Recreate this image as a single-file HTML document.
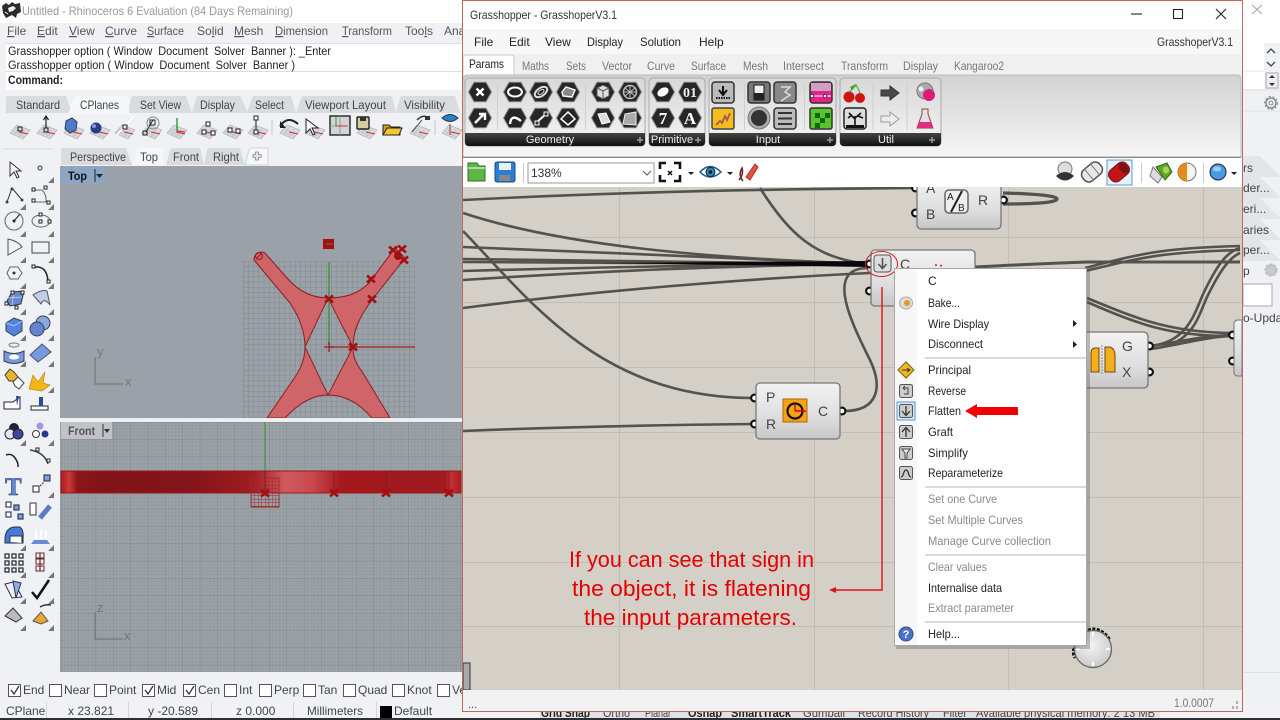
<!DOCTYPE html>
<html><head><meta charset="utf-8"><title>Grasshopper</title>
<style>
html,body{margin:0;padding:0;background:#f0f1f4;width:1280px;height:720px;overflow:hidden}
svg{display:block;position:absolute;left:0;top:0;filter:blur(.3px)}
text{font-family:"Liberation Sans",sans-serif;font-size:12px;fill:#222}
.g{fill:#999}.rm{fill:#555}.tb{fill:#444}.gt{fill:#777}.dis{fill:#8a8a8a}
.b{font-weight:bold}
.cmp{font-size:14px;fill:#444}
.ann{font-size:22px;fill:#e50000}
.u{text-decoration:underline}
.pre{white-space:pre}
</style></head><body>
<svg width="1280" height="720" viewBox="0 0 1280 720" xmlns="http://www.w3.org/2000/svg">
<defs>
<clipPath id="cv"><rect x="463" y="187" width="779" height="503"/></clipPath>
<linearGradient id="rib" x1="0" y1="0" x2="0" y2="1"><stop offset="0" stop-color="#d2d2d2"/><stop offset="1" stop-color="#f6f6f6"/></linearGradient>
<linearGradient id="grp" x1="0" y1="0" x2="0" y2="1"><stop offset="0" stop-color="#d8d8d8"/><stop offset="1" stop-color="#f4f4f4"/></linearGradient>
<linearGradient id="bar" x1="0" y1="0" x2="0" y2="1"><stop offset="0" stop-color="#444"/><stop offset="1" stop-color="#111"/></linearGradient>
<linearGradient id="cmp" x1="0" y1="0" x2="0" y2="1"><stop offset="0" stop-color="#f2f2f2"/><stop offset=".6" stop-color="#dedede"/><stop offset="1" stop-color="#c6c6c6"/></linearGradient>
<radialGradient id="dial" cx=".45" cy=".4" r=".7"><stop offset="0" stop-color="#f4f4f4"/><stop offset="1" stop-color="#c4c4c4"/></radialGradient>
<linearGradient id="band" x1="0" y1="0" x2="1" y2="0">
<stop offset="0" stop-color="#a81c20"/><stop offset=".02" stop-color="#cf3a3c"/><stop offset=".04" stop-color="#8c1519"/><stop offset=".12" stop-color="#7f1417"/><stop offset=".33" stop-color="#84151a"/><stop offset=".48" stop-color="#a01c20"/><stop offset=".56" stop-color="#cf5a5e"/><stop offset=".63" stop-color="#c9484c"/><stop offset=".7" stop-color="#a5191e"/><stop offset=".96" stop-color="#a01a1f"/><stop offset=".975" stop-color="#c53034"/><stop offset="1" stop-color="#a81c20"/></linearGradient>
<pattern id="fine" x="61" y="422" width="17.35" height="17.35" patternUnits="userSpaceOnUse">
<path d="M3.47 0V17.35M6.94 0V17.35M10.41 0V17.35M13.88 0V17.35M0 3.47H17.35M0 6.94H17.35M0 10.41H17.35M0 13.88H17.35" stroke="#929a9f" stroke-width=".7" fill="none"/>
<path d="M0 0V17.35M0 0H17.35" stroke="#7f868b" stroke-width="1" fill="none"/>
</pattern>
<pattern id="plane" x="243" y="261" width="5.2" height="5.2" patternUnits="userSpaceOnUse"><path d="M0 0V5.2M0 0H5.2" stroke="#7c858a" stroke-width=".8" fill="none"/></pattern>
<pattern id="rgrid" x="251" y="478" width="3.5" height="3.5" patternUnits="userSpaceOnUse"><path d="M0 0V3.5M0 0H3.5" stroke="#a32a2e" stroke-width=".9" fill="none"/></pattern>
<symbol id="hx" overflow="visible" viewBox="-12 -11 24 22" width="24" height="22"><polygon points="-11.5,0 -6,-9.8 6,-9.8 11.5,0 6,9.8 -6,9.8" fill="#262626" stroke="#8c8c8c" stroke-width="1"/></symbol>
<symbol id="cp" overflow="visible" viewBox="0 0 24 20" width="24" height="20"><polygon points="2,13 9,5 22,10 15,19" fill="#d8d9dc" stroke="#b4b4b8" stroke-width=".7"/><path d="M6 9 19 14M4 11 17 17M12 6 6 15M17 8 11 17" stroke="#bcbcc0" stroke-width=".6"/><path d="M11 12 20 14" stroke="#c33" stroke-width="1.1"/></symbol>
<symbol id="tri" overflow="visible" viewBox="0 0 6 6" width="6" height="6"><polygon points="6,0 6,6 0,6" fill="#777"/></symbol>
<g id="mk"><path d="M-4 -3.5 4 3.5M-4 3.5 4 -3.5" stroke="#a40f12" stroke-width="2.6"/></g>
<g id="port"><circle r="3.400" fill="#fff" stroke="#111" stroke-width="2.200"/></g>
</defs>

<!-- Rhino background -->
<rect width="1280" height="720" fill="#f0f1f4"/>
<rect width="1280" height="23" fill="#fff"/>
<path d="M2 6 6 3 9 5 12 2 15 4 20 3 21 12 17 14 16 18 12 15 6 18 3 13Z" fill="#2b2b2b"/><path d="M8 8 13 6 16 8 13 11 9 12Z" fill="#f0f0f0"/><path d="M5 12 8 14" stroke="#eee"/>
<text x="22" y="15" class="g" textLength="271" lengthAdjust="spacingAndGlyphs">Untitled - Rhinoceros 6 Evaluation (84 Days Remaining)</text>
<g>
<text class="rm" x="7" y="35"><tspan class="u">F</tspan>ile</text>
<text class="rm" x="37" y="35"><tspan class="u">E</tspan>dit</text>
<text class="rm" x="69" y="35"><tspan class="u">V</tspan>iew</text>
<text class="rm" x="105" y="35"><tspan class="u">C</tspan>urve</text>
<text class="rm" x="147" y="35" textLength="37" lengthAdjust="spacingAndGlyphs"><tspan class="u">S</tspan>urface</text>
<text class="rm" x="197" y="35">So<tspan class="u">l</tspan>id</text>
<text class="rm" x="234" y="35"><tspan class="u">M</tspan>esh</text>
<text class="rm" x="275" y="35" textLength="53" lengthAdjust="spacingAndGlyphs"><tspan class="u">D</tspan>imension</text>
<text class="rm" x="342" y="35" textLength="50" lengthAdjust="spacingAndGlyphs"><tspan class="u">T</tspan>ransform</text>
<text class="rm" x="405" y="35">Too<tspan class="u">l</tspan>s</text>
<text class="rm" x="444" y="35">Ana</text>
</g>
<!-- command -->
<rect x="6" y="43" width="456" height="47" fill="#fff"/>
<path d="M6 71.500H462M6 43.500H462" stroke="#dcdde2"/>
<text x="8" y="55" class="pre" textLength="323" lengthAdjust="spacingAndGlyphs">Grasshopper option ( Window  Document  Solver  Banner ): _Enter</text>
<text x="8" y="69" class="pre" textLength="287" lengthAdjust="spacingAndGlyphs">Grasshopper option ( Window  Document  Solver  Banner )</text>
<text x="8" y="84" class="b" textLength="55" lengthAdjust="spacingAndGlyphs">Command:</text>
<!-- toolbar tabs -->
<g fill="#dadbdf">
<path d="M6 113V98Q6 96 8 96H66L72 113Z"/><path d="M128 113 131 98Q132 96 134 96H186L192 113Z"/><path d="M192 113 196 98Q197 96 199 96H240L248 113Z"/><path d="M247 113 252 98Q253 96 255 96H291L296 113Z"/><path d="M296 113 301 98Q302 96 304 96H392L396 113Z"/><path d="M396 113 400 98Q401 96 403 96H455L460 113Z"/>
</g>
<path d="M68 114 74 98Q75 96 77 96H126Q129 96 129 99V114Z" fill="#f6f7f9"/>
<g>
<text class="tb" x="16" y="109" textLength="44" lengthAdjust="spacingAndGlyphs">Standard</text>
<text class="tb" x="80" y="109" textLength="39" lengthAdjust="spacingAndGlyphs">CPlanes</text>
<text class="tb" x="140" y="109" textLength="41" lengthAdjust="spacingAndGlyphs">Set View</text>
<text class="tb" x="200" y="109" textLength="35" lengthAdjust="spacingAndGlyphs">Display</text>
<text class="tb" x="255" y="109" textLength="29" lengthAdjust="spacingAndGlyphs">Select</text>
<text class="tb" x="305" y="109" textLength="81" lengthAdjust="spacingAndGlyphs">Viewport Layout</text>
<text class="tb" x="404" y="109" textLength="41" lengthAdjust="spacingAndGlyphs">Visibility</text>
</g>
<!-- cplane toolbar -->
<use href="#cp" x="8" y="120"/><use href="#cp" x="35" y="120"/><use href="#cp" x="62" y="120"/><use href="#cp" x="88" y="120"/><use href="#cp" x="113" y="120"/><use href="#cp" x="140" y="120"/><use href="#cp" x="165" y="120"/><use href="#cp" x="195" y="120"/><use href="#cp" x="221" y="120"/><use href="#cp" x="246" y="120"/><use href="#cp" x="278" y="120"/><use href="#cp" x="303" y="120"/><use href="#cp" x="355" y="120"/><use href="#cp" x="408" y="120"/><use href="#cp" x="440" y="120"/>
<rect x="18" y="127" width="4" height="4" fill="none" stroke="#222"/><rect x="44" y="128" width="4" height="4" fill="none" stroke="#222"/><path d="M46 128V117M43.500 120 46 116 48.500 120" stroke="#222" fill="none" stroke-width="1.200"/>
<path d="M66 121 72 118 77 122 76 130 70 133 65 129Z" fill="#4f78cc" stroke="#345"/>
<circle cx="96" cy="128" r="5.500" fill="#243f8f"/><circle cx="94" cy="126" r="2" fill="#7f9ce0"/>
<path d="M117 135 134 116" stroke="#fff" stroke-width="1.500"/><rect x="123" y="125" width="4" height="4" fill="none" stroke="#222"/>
<path d="M146 132 153 120" stroke="#222"/><rect x="143" y="131" width="4" height="4" fill="none" stroke="#222"/><circle cx="153" cy="123" r="6" fill="none" stroke="#888"/><rect x="150" y="120" width="5" height="5" fill="none" stroke="#222"/>
<path d="M177 118V131" stroke="#2a9a2a" stroke-width="1.400"/><path d="M177 131 185 132" stroke="#c33" stroke-width="1.200"/>
<g fill="#fff" stroke="#222"><rect x="202" y="130" width="4" height="4"/><rect x="206" y="122" width="4" height="4"/><rect x="211" y="131" width="4" height="4"/><rect x="228" y="128" width="4" height="4"/><rect x="236" y="129" width="4" height="4"/><rect x="254" y="116" width="4" height="4"/><rect x="254" y="130" width="4" height="4"/></g><path d="M256 120V130" stroke="#222"/>
<path d="M280 126Q288 115 298 124" fill="none" stroke="#222" stroke-width="2"/><path d="M280 121V128H286Z" fill="#222"/>
<path d="M306 119V133L310 129 313 135 315 134 312 128H318Z" fill="#fff" stroke="#222"/>
<rect x="330" y="116" width="20" height="19" fill="#d3d4d6" stroke="#222" stroke-width="1.400"/><path d="M330 126H350M340 116V135" stroke="#999"/><path d="M336 126H347" stroke="#c33"/><path d="M336 117V126" stroke="#2a2"/>
<rect x="357" y="117" width="12" height="12" rx="1" fill="#d8cda0" stroke="#222" stroke-width="1.400"/><rect x="360" y="117" width="6" height="4" fill="#333"/>
<path d="M383 135V125H389L391 127H400V135Z" fill="#dca018" stroke="#222"/><path d="M383 135 387 128H402L399 135Z" fill="#f6c534" stroke="#222"/>
<path d="M412 132 422 120" stroke="#555"/><path d="M417 120Q424 113 430 119" stroke="#333" fill="none" stroke-width="1.400"/><rect x="425" y="116" width="5" height="4" fill="#333"/>
<path d="M442 118Q450 111 458 118Q450 125 442 118Z" fill="#2b7fc6" stroke="#234"/><path d="M450 124V135" stroke="#a33"/>
<path d="M272 120V135M435 120V135" stroke="#c7c8cb"/>
<!-- view tabs -->
<g fill="#dadbdf"><path d="M61 165V150Q61 148 63 148H126L132 165Z"/><path d="M166 165 170 150Q171 148 173 148H200L204 165Z"/><path d="M204 165 207 150Q208 148 210 148H240L245 165Z"/></g>
<path d="M132 165 137 150Q138 148 140 148H160Q163 148 163 151V165Z" fill="#f6f7f9"/><path d="M245 165 249 150Q250 148 252 148H268V165Z" fill="#f6f7f9" stroke="#d3d4d8"/>
<g><text class="tb" x="70" y="161" textLength="56" lengthAdjust="spacingAndGlyphs">Perspective</text><text class="tb" x="140" y="161" textLength="18" lengthAdjust="spacingAndGlyphs">Top</text><text class="tb" x="173" y="161" textLength="26" lengthAdjust="spacingAndGlyphs">Front</text><text class="tb" x="213" y="161" textLength="26" lengthAdjust="spacingAndGlyphs">Right</text></g>
<path d="M255.500 152h3v2.500h2.500v3h-2.500v2.500h-3v-2.500H253v-3h2.500z" fill="#e4e4e4" stroke="#888" stroke-width=".8"/>
<!-- Top viewport -->
<rect x="60" y="166" width="402" height="252" fill="#9aa1a8"/>
<rect x="61" y="167" width="44" height="17" fill="#8ca7c6"/>
<text x="68" y="180" class="b" textLength="19" lengthAdjust="spacingAndGlyphs" style="fill:#111">Top</text>
<path d="M95 169V182" stroke="#222"/><path d="M96 174H103L99.500 178Z" fill="#222"/>
<rect x="243" y="261" width="172" height="157" fill="url(#plane)"/>
<path d="M254 260A7.500 7.500 0 0 1 265 253L287 278C300 293 315 298 328 298C345 298 358 294 369 283L395 248L405 258L372 300C360 316 353 330 353 347C353 360 358 366 363 373L390 418H372C360 404 345 395 328 395C312 395 298 404 285 418H267L293 380C300 370 305 360 305 347C305 330 298 315 290 303Z" fill="#cf6569" stroke="#8d1d20"/>
<path d="M328 298 353 347 328 395 305 347Z" fill="#9aa1a8" stroke="#8d1d20"/>
<path d="M328 298 353 347 328 395 305 347Z" fill="url(#plane)"/>
<circle cx="259" cy="256" r="3.500" fill="none" stroke="#8d1d20"/><path d="M257 258 261 254" stroke="#8d1d20"/>
<path d="M329 262V345" stroke="#4f9a4f" stroke-width="1.800"/><path d="M329 347H415" stroke="#a33436" stroke-width="1.500"/><path d="M324 347H334M329 342V352" stroke="#9c1a1c" stroke-width="1.200"/>
<rect x="323" y="239" width="11" height="10" fill="#a40f12"/><path d="M326 244H333" stroke="#4a8a3a"/>
<use href="#mk" x="329" y="299"/><use href="#mk" x="371" y="279"/><use href="#mk" x="372" y="299"/><use href="#mk" x="353" y="347"/><use href="#mk" x="393" y="250"/><use href="#mk" x="402" y="249"/><use href="#mk" x="404" y="260"/><circle cx="398" cy="256" r="4" fill="#a40f12"/>
<path d="M95 357V384H123" fill="none" stroke="#777" stroke-width="1.200"/>
<text x="97" y="356" style="fill:#777;font-size:13px">y</text><text x="125" y="386" style="fill:#777;font-size:13px">x</text>
<!-- divider + Front viewport -->
<rect x="60" y="418" width="402" height="4" fill="#eef0f2"/>
<rect x="60" y="422" width="402" height="250" fill="#9ba2a8"/>
<rect x="60" y="422" width="402" height="250" fill="url(#fine)"/>
<rect x="61" y="422" width="51" height="17" fill="#bfc3c7"/>
<text x="68" y="435" class="b" style="fill:#555" textLength="27" lengthAdjust="spacingAndGlyphs">Front</text>
<path d="M103 424V437" stroke="#333"/><path d="M104 429H110L107 433Z" fill="#333"/>
<path d="M265 422V471" stroke="#4f9a4f" stroke-width="1.500"/>
<rect x="61" y="471" width="400" height="22" fill="url(#band)" stroke="#9c1a1e"/>
<path d="M143 471V493M196 471V493M334 471V493M386 471V493M449 471V493" stroke="#8a1418" stroke-width=".8"/>
<rect x="251" y="478" width="28" height="29" fill="url(#rgrid)" stroke="#a32a2e"/>
<path d="M265 471V493" stroke="#8a1418"/>
<use href="#mk" x="265" y="493"/><use href="#mk" x="334" y="493"/><use href="#mk" x="386" y="493"/><use href="#mk" x="449" y="493"/>
<path d="M95 612V639H123" fill="none" stroke="#777" stroke-width="1.200"/>
<text x="97" y="612" style="fill:#777;font-size:13px">z</text><text x="124" y="640" style="fill:#777;font-size:13px">x</text>
<!-- Left toolbars -->
<path d="M3 149H53" stroke="#d8d9dc"/>
<path d="M10 162V176L14 172 17 178 19 177 16 171H21Z" fill="#f8f8f8" stroke="#333"/><circle cx="40" cy="168" r="2" fill="none" stroke="#333"/>
<path d="M7 202 12 188 22 200" fill="none" stroke="#333"/><g fill="#444"><circle cx="7" cy="202" r="1.500"/><circle cx="12" cy="189" r="1.500"/><circle cx="22" cy="200" r="1.500"/></g>
<path d="M33 190H42Q47 195 46 202H33" fill="none" stroke="#666"/><g fill="#fff" stroke="#222"><rect x="32" y="188" width="3" height="3"/><rect x="44" y="186" width="3" height="3"/><rect x="32" y="199" width="3" height="3"/><rect x="47" y="201" width="3" height="3"/></g>
<circle cx="14" cy="221" r="9" fill="none" stroke="#666"/><path d="M14 221 20 214" stroke="#222"/><circle cx="14" cy="221" r="1.500" fill="#222"/>
<ellipse cx="41" cy="221" rx="9" ry="6" fill="none" stroke="#666"/><g fill="#fff" stroke="#222"><rect x="39" y="213" width="3" height="3"/><rect x="39" y="220" width="3" height="3"/><rect x="48" y="220" width="3" height="3"/></g>
<path d="M8 239V255L22 247Q18 241 8 239Z" fill="none" stroke="#555"/>
<rect x="32" y="242" width="17" height="11" fill="none" stroke="#444"/>
<polygon points="7,273 10,267 18,267 22,273 18,279 10,279" fill="none" stroke="#666"/><circle cx="14" cy="273" r="1.500" fill="#333"/>
<path d="M33 267H38Q47 268 48 281" fill="none" stroke="#222" stroke-width="1.500"/><g fill="#fff" stroke="#222"><rect x="32" y="265" width="3" height="3"/><rect x="47" y="280" width="3" height="3"/></g>
<path d="M7 301 12 292 24 291 21 304 10 306Z" fill="#6a88cc" stroke="#334"/><path d="M14 292 12 305M7 298 22 297" stroke="#cfd8f0" stroke-width=".7"/><g fill="#fff" stroke="#222"><rect x="5" y="302" width="3" height="3"/><rect x="11" y="291" width="3" height="3"/><rect x="21" y="291" width="3" height="3"/><rect x="15" y="306" width="3" height="3"/></g>
<path d="M33 295Q42 289 47 291L50 305Q44 297 41 304Z" fill="#c0cce8" stroke="#556"/>
<path d="M6 323 14 318 22 321V331L14 336 6 331Z" fill="#5482e0" stroke="#345"/><path d="M6 323 14 326 22 321" stroke="#a8c0f0" fill="none"/>
<circle cx="43" cy="323" r="7" fill="#8ca6e0" stroke="#345"/><circle cx="37" cy="329" r="7" fill="#6484d0" stroke="#345"/>
<ellipse cx="14" cy="345" rx="5" ry="2" fill="none" stroke="#777"/><path d="M4 351Q14 356 24 351V361Q14 366 4 361Z" fill="#7a98e0" stroke="#345"/><ellipse cx="14" cy="357" rx="5" ry="2.500" fill="#fff"/>
<path d="M30 355 42 344 51 352 38 362Z" fill="#7a98e0" stroke="#456"/>
<path d="M5 375 10 369 14 372 18 377 14 381 9 381Z" fill="#e7b52c" stroke="#443"/><path d="M13 382 18 377 24 383 19 389 15 386Z" fill="#fff" stroke="#444"/>
<path d="M29 389 33 375 38 382 45 372 43 383 50 385 42 391Z" fill="#f4b518" stroke="#b07a10" stroke-width=".6"/>
<path d="M4 402H13L20 397V409H4Z" fill="#fff" stroke="#223"/><path d="M16 396H19L17 406Z" fill="#2a4a9a"/><path d="M31 406H48V410H31Z" fill="#fff" stroke="#223"/><path d="M39 397H43V406H39Z" fill="#2a4a9a"/>
<circle cx="14" cy="428" r="5" fill="#223"/><circle cx="10" cy="434" r="5" fill="#e8e8f4" stroke="#223"/><circle cx="18" cy="434" r="5" fill="#3a4aa0" stroke="#223"/>
<circle cx="40" cy="426" r="3.500" fill="#9a9adc"/><circle cx="36" cy="434" r="3.500" fill="#fff" stroke="#333"/><circle cx="45" cy="434" r="3.500" fill="#223a8a"/>
<path d="M6 455Q14 452 18 464V467" fill="none" stroke="#222" stroke-width="1.500"/><path d="M30 450Q44 452 48 464" fill="none" stroke="#444" stroke-width="1.500"/><rect x="36" y="448" width="3" height="3" fill="#fff" stroke="#222"/><rect x="47" y="459" width="3" height="3" fill="#fff" stroke="#222"/>
<text x="5" y="495" style="font-family:'Liberation Serif',serif;font-size:25px;font-weight:bold;fill:#5a88e0;stroke:#234;stroke-width:.5">T</text>
<rect x="33" y="486" width="6" height="6" fill="#fff" stroke="#222"/><rect x="44" y="475" width="6" height="6" fill="#7da0e0" stroke="#223"/><path d="M40 486 44 482" stroke="#333" stroke-dasharray="2 1"/>
<g fill="#fff" stroke="#235" stroke-width="1.100"><rect x="6" y="502" width="5" height="5"/><rect x="6" y="512" width="5" height="5"/><rect x="18" y="514" width="5" height="5" fill="#7da0e0"/><rect x="14" y="505" width="5" height="5" fill="#7da0e0"/></g>
<rect x="30" y="503" width="6" height="12" fill="#fff" stroke="#333"/><path d="M40 518 50 506" stroke="#5a7ac8" stroke-width="5"/>
<path d="M5 538Q6 528 14 527H20Q24 530 23 538V543H5Z" fill="#4a78d8" stroke="#234"/><path d="M10 542V536H22V543" fill="#fff" stroke="#234"/>
<path d="M31 544H50L47 540H34Z" fill="#6a8ad8"/><path d="M36 531V539M41 531V539M46 531V539" stroke="#fff" stroke-width="2"/>
<g fill="none" stroke="#223" stroke-width="1.200"><rect x="5" y="554" width="4" height="4"/><rect x="12" y="554" width="4" height="4"/><rect x="19" y="554" width="4" height="4"/><rect x="5" y="561" width="4" height="4"/><rect x="12" y="561" width="4" height="4"/><rect x="19" y="561" width="4" height="4"/><rect x="5" y="568" width="4" height="4"/><rect x="12" y="568" width="4" height="4"/><rect x="19" y="568" width="4" height="4"/></g>
<path d="M40 553V571" stroke="#c33" stroke-width="1.500"/><g fill="none" stroke="#533"><rect x="36" y="553" width="8" height="5"/><rect x="36" y="559" width="8" height="5"/><rect x="36" y="566" width="8" height="5"/></g>
<path d="M5 584 14 582 22 597 12 598Z" fill="#eef" stroke="#334"/><path d="M13 581 21 583 16 598Z" fill="#8cacea" stroke="#334"/>
<path d="M32 592 37 598 49 580" fill="none" stroke="#111" stroke-width="2.500"/>
<path d="M5 616 13 608 22 618 16 622Z" fill="#bbb" stroke="#333"/><path d="M33 621 41 612 48 621 41 624Z" fill="#e8a830" stroke="#555"/><path d="M40 607Q45 604 51 605" stroke="#333" fill="none" stroke-width="1.500"/>
<g><use href="#tri" x="48" y="177"/><use href="#tri" x="20" y="204"/><use href="#tri" x="48" y="204"/><use href="#tri" x="20" y="231"/><use href="#tri" x="48" y="231"/><use href="#tri" x="20" y="257"/><use href="#tri" x="48" y="257"/><use href="#tri" x="20" y="283"/><use href="#tri" x="48" y="283"/><use href="#tri" x="20" y="309"/><use href="#tri" x="48" y="309"/><use href="#tri" x="20" y="335"/><use href="#tri" x="48" y="335"/><use href="#tri" x="20" y="361"/><use href="#tri" x="48" y="361"/><use href="#tri" x="48" y="387"/><use href="#tri" x="20" y="440"/><use href="#tri" x="48" y="440"/><use href="#tri" x="48" y="492"/><use href="#tri" x="20" y="545"/><use href="#tri" x="48" y="545"/><use href="#tri" x="20" y="572"/><use href="#tri" x="48" y="572"/><use href="#tri" x="20" y="598"/><use href="#tri" x="48" y="598"/><use href="#tri" x="20" y="625"/><use href="#tri" x="48" y="625"/></g>
<!-- Osnap row -->
<g fill="#fff" stroke="#555"><rect x="8.500" y="684.500" width="12" height="12"/><rect x="49.500" y="684.500" width="12" height="12"/><rect x="94.500" y="684.500" width="12" height="12"/><rect x="142.500" y="684.500" width="12" height="12"/><rect x="183.500" y="684.500" width="12" height="12"/><rect x="224.500" y="684.500" width="12" height="12"/><rect x="259.500" y="684.500" width="12" height="12"/><rect x="303.500" y="684.500" width="12" height="12"/><rect x="343.500" y="684.500" width="12" height="12"/><rect x="392.500" y="684.500" width="12" height="12"/><rect x="437.500" y="684.500" width="12" height="12"/></g>
<path d="M11 690 14 694 19 686M145 690 148 694 153 686M186 690 189 694 194 686" fill="none" stroke="#333" stroke-width="1.300"/>
<g><text class="tb" x="23" y="694">End</text><text class="tb" x="64" y="694">Near</text><text class="tb" x="109" y="694">Point</text><text class="tb" x="157" y="694">Mid</text><text class="tb" x="198" y="694">Cen</text><text class="tb" x="239" y="694">Int</text><text class="tb" x="274" y="694">Perp</text><text class="tb" x="318" y="694">Tan</text><text class="tb" x="358" y="694">Quad</text><text class="tb" x="407" y="694">Knot</text><text class="tb" x="452" y="694">Ve</text></g>
<!-- Status -->
<rect x="0" y="702" width="1280" height="16" fill="#f1f2f5"/>
<path d="M46.500 702V718M128.500 702V718M211.500 702V718M293.500 702V718M376.500 702V718" stroke="#d4d5d9"/>
<text class="tb" x="6" y="715">CPlane</text><text class="tb" x="68" y="715">x 23.821</text><text class="tb" x="148" y="715">y -20.589</text><text class="tb" x="236" y="715">z 0.000</text><text class="tb" x="307" y="715" textLength="56" lengthAdjust="spacingAndGlyphs">Millimeters</text>
<rect x="380" y="706" width="12" height="12" fill="#000"/><text class="tb" x="394" y="715">Default</text>
<rect x="540" y="700" width="620" height="18" fill="#dfe3e8"/>
<g><text x="541" y="717" class="b" textLength="49" lengthAdjust="spacingAndGlyphs">Grid Snap</text><text class="tb" x="603" y="717" textLength="27" lengthAdjust="spacingAndGlyphs">Ortho</text><text class="tb" x="645" y="717" textLength="26" lengthAdjust="spacingAndGlyphs">Planar</text><text x="688" y="717" class="b" textLength="34" lengthAdjust="spacingAndGlyphs">Osnap</text><text x="731" y="717" class="b" textLength="60" lengthAdjust="spacingAndGlyphs">SmartTrack</text><text class="tb" x="803" y="717" textLength="42" lengthAdjust="spacingAndGlyphs">Gumball</text><text class="tb" x="858" y="717" textLength="71" lengthAdjust="spacingAndGlyphs">Record History</text><text class="tb" x="943" y="717" textLength="24" lengthAdjust="spacingAndGlyphs">Filter</text><text class="tb" x="976" y="717" textLength="179" lengthAdjust="spacingAndGlyphs">Available physical memory: 2 13 MB</text></g>
<rect x="0" y="718" width="1280" height="2" fill="#2f2f2f"/>

<!-- right Rhino panel -->
<rect x="1243" y="0" width="37" height="43" fill="#fff"/>
<path d="M1252 5 1262 14M1262 5 1252 14" stroke="#aaa" stroke-width="1.100"/>
<rect x="1243" y="43" width="21" height="27" fill="#fff"/><rect x="1243" y="72" width="22" height="17" fill="#fff"/>
<path d="M1267 53 1271 49 1275 53M1267 62 1271 66 1275 62" fill="none" stroke="#444" stroke-width="1.300"/>
<rect x="1266" y="73" width="12" height="15" fill="#eee" stroke="#aaa"/><path d="M1269 78H1275L1272 75ZM1269 83H1275L1272 86Z" fill="#333"/>
<path d="M1243 90H1280M1243 111H1280M1243 672.500H1280" stroke="#e0e1e5"/>
<circle cx="1271" cy="103" r="5" fill="none" stroke="#888" stroke-width="1.500"/><circle cx="1271" cy="103" r="2" fill="none" stroke="#888"/><circle cx="1271" cy="103" r="6.500" fill="none" stroke="#888" stroke-dasharray="2 2"/>
<g fill="#e4e5e9"><path d="M1243 156H1260L1280 176V177H1243Z"/><path d="M1243 177H1260L1280 197V198H1243Z"/><path d="M1243 198H1260L1280 218V219H1243Z"/><path d="M1243 219H1260L1280 239V240H1243Z"/><path d="M1243 240H1260L1280 260V261H1243Z"/></g>
<text class="tb" x="1243" y="172">rs</text><text class="tb" x="1243" y="192">der...</text><text class="tb" x="1243" y="213">eri...</text><text class="tb" x="1243" y="234">aries</text><text class="tb" x="1243" y="254">per...</text><text class="tb" x="1243" y="275">p</text>
<circle cx="1271" cy="270" r="5.500" fill="#c8c9cc" stroke="#bbb" stroke-width="2" stroke-dasharray="3 1"/>
<rect x="1243" y="284" width="29" height="22" fill="#fff" stroke="#aaa"/>
<text class="tb" x="1243" y="322">o-Updat</text>

<!-- Grasshopper window -->
<rect x="462.500" y=".5" width="780" height="711" fill="#f0f0f0" stroke="#b96a5a"/>
<rect x="463" y="1" width="779" height="28" fill="#fff"/>
<text x="470" y="19" style="fill:#333" textLength="147" lengthAdjust="spacingAndGlyphs">Grasshopper - GrasshoperV3.1</text>
<path d="M1131 14H1142" stroke="#222" stroke-width="1.100"/><rect x="1173.500" y="9.500" width="9" height="9" fill="none" stroke="#222" stroke-width="1.100"/><path d="M1216 9 1226 19M1226 9 1216 19" stroke="#222" stroke-width="1.100"/>
<rect x="463" y="29" width="779" height="25" fill="#f7f7f7"/>
<text x="474" y="46" style="fill:#222">File</text><text x="509" y="46" style="fill:#222">Edit</text><text x="545" y="46" style="fill:#222">View</text><text x="587" y="46" style="fill:#222" textLength="36" lengthAdjust="spacingAndGlyphs">Display</text><text x="640" y="46" style="fill:#222" textLength="41" lengthAdjust="spacingAndGlyphs">Solution</text><text x="699" y="46" style="fill:#222">Help</text>
<text x="1157" y="46" style="fill:#333" textLength="76" lengthAdjust="spacingAndGlyphs">GrasshoperV3.1</text>
<rect x="463" y="54" width="779" height="21" fill="#f0f0f0"/>
<path d="M463 76V58Q463 55 466 55H510Q514 55 514 58V76Z" fill="#fdfdfd" stroke="#ccc"/>
<text x="469" y="68" style="fill:#222" textLength="35" lengthAdjust="spacingAndGlyphs">Params</text>
<g><text class="gt" x="522" y="70" textLength="27" lengthAdjust="spacingAndGlyphs">Maths</text><text class="gt" x="566" y="70" textLength="20" lengthAdjust="spacingAndGlyphs">Sets</text><text class="gt" x="602" y="70" textLength="30" lengthAdjust="spacingAndGlyphs">Vector</text><text class="gt" x="647" y="70" textLength="28" lengthAdjust="spacingAndGlyphs">Curve</text><text class="gt" x="691" y="70" textLength="35" lengthAdjust="spacingAndGlyphs">Surface</text><text class="gt" x="743" y="70" textLength="25" lengthAdjust="spacingAndGlyphs">Mesh</text><text class="gt" x="783" y="70" textLength="41" lengthAdjust="spacingAndGlyphs">Intersect</text><text class="gt" x="841" y="70" textLength="47" lengthAdjust="spacingAndGlyphs">Transform</text><text class="gt" x="903" y="70" textLength="35" lengthAdjust="spacingAndGlyphs">Display</text><text class="gt" x="954" y="70" textLength="50" lengthAdjust="spacingAndGlyphs">Kangaroo2</text></g>
<path d="M463 157V80Q463 75 468 75H1237Q1241 75 1241 80V157Z" fill="url(#rib)" stroke="#bbb"/>
<rect x="465" y="78" width="180" height="68" rx="4" fill="url(#grp)" stroke="#aaa"/><rect x="649" y="78" width="56" height="68" rx="4" fill="url(#grp)" stroke="#aaa"/><rect x="709" y="78" width="127" height="68" rx="4" fill="url(#grp)" stroke="#aaa"/><rect x="840" y="78" width="101" height="68" rx="4" fill="url(#grp)" stroke="#aaa"/>
<path d="M465 133H645V142Q645 146 641 146H469Q465 146 465 142ZM649 133H705V142Q705 146 701 146H653Q649 146 649 142ZM709 133H836V142Q836 146 832 146H713Q709 146 709 142ZM840 133H941V142Q941 146 937 146H844Q840 146 840 142Z" fill="url(#bar)"/>
<text x="550" y="143" text-anchor="middle" style="fill:#eee;font-size:11px">Geometry</text><text x="672" y="143" text-anchor="middle" style="fill:#eee;font-size:11px">Primitive</text><text x="768" y="143" text-anchor="middle" style="fill:#eee;font-size:11px">Input</text><text x="886" y="143" text-anchor="middle" style="fill:#eee;font-size:11px">Util</text>
<path d="M637 140H643M640 137V143M695 140H701M698 137V143M827 140H833M830 137V143M929 140H935M932 137V143" stroke="#999" stroke-width="1.500"/>
<path d="M497.500 83V130M585.500 83V130M744.500 83V130M804.500 83V130M873 83V130M907 83V130" stroke="#cfcfcf"/>
<!-- hexes -->
<use href="#hx" x="468" y="81"/><use href="#hx" x="503" y="81"/><use href="#hx" x="529" y="81"/><use href="#hx" x="556" y="81"/><use href="#hx" x="591" y="81"/><use href="#hx" x="618" y="81"/><use href="#hx" x="651" y="81"/><use href="#hx" x="678" y="81"/>
<use href="#hx" x="468" y="107"/><use href="#hx" x="503" y="107"/><use href="#hx" x="529" y="107"/><use href="#hx" x="556" y="107"/><use href="#hx" x="591" y="107"/><use href="#hx" x="618" y="107"/><use href="#hx" x="651" y="107"/><use href="#hx" x="678" y="107"/>
<path d="M476.500 88.500 483.500 95.500M483.500 88.500 476.500 95.500" stroke="#fff" stroke-width="2.400"/>
<path d="M475 123 484 114M479 114H485V120" fill="none" stroke="#fff" stroke-width="2.400"/>
<ellipse cx="515" cy="92" rx="7" ry="4.500" fill="none" stroke="#fff" stroke-width="2"/>
<ellipse cx="541" cy="92" rx="7" ry="4" transform="rotate(-35 541 92)" fill="none" stroke="#ddd" stroke-width="2"/><ellipse cx="541" cy="92" rx="3.500" ry="1.800" transform="rotate(-35 541 92)" fill="none" stroke="#ddd"/>
<path d="M562 92 566 87 575 90 572 97 563 96Z" fill="#888" stroke="#fff" stroke-width="1.400"/>
<path d="M510 124Q511 113 521 121" fill="none" stroke="#fff" stroke-width="2.400"/>
<path d="M537 122 546 114" stroke="#fff" stroke-width="2"/><rect x="535" y="121" width="4" height="4" fill="#333" stroke="#fff"/><rect x="544" y="112" width="4" height="4" fill="#333" stroke="#fff"/>
<path d="M568 112 575 119 568 125 561 119Z" fill="none" stroke="#fff" stroke-width="1.500"/>
<path d="M597 88 603 85 609 88V96L603 99 597 96Z" fill="#ddd" stroke="#555"/><path d="M597 88 603 91 609 88M603 91V99" stroke="#555" fill="none"/>
<circle cx="630" cy="92" r="6.500" fill="none" stroke="#bbb" stroke-width="1.500"/><path d="M625 88 635 96M635 88 625 96M630 85V99M623 92H637" stroke="#bbb"/>
<path d="M598 114 606 113 610 122 602 124Z" fill="#ddd" stroke="#fff"/>
<path d="M625 114 636 112 636 125 623 124Z" fill="#aaa" stroke="#eee"/>
<ellipse cx="663" cy="92" rx="6" ry="4" transform="rotate(-30 663 92)" fill="#fff"/>
<text x="690" y="97" text-anchor="middle" style="font-family:'Liberation Serif',serif;font-size:14px;font-weight:bold;fill:#eee">01</text>
<text x="663" y="124" text-anchor="middle" style="font-family:'Liberation Serif',serif;font-size:17px;font-weight:bold;fill:#fff">7</text>
<text x="690" y="124" text-anchor="middle" style="font-family:'Liberation Serif',serif;font-size:17px;font-weight:bold;fill:#fff">A</text>
<!-- input icons -->
<rect x="712" y="82" width="22" height="21" rx="3" fill="#bbb" stroke="#333" stroke-width="1.500"/><path d="M723 86V93M719 90 723 95 727 90" stroke="#111" stroke-width="2" fill="none"/><path d="M716 98H730" stroke="#111" stroke-width="2" stroke-dasharray="1.500 1"/>
<rect x="712" y="108" width="22" height="21" rx="2" fill="#f4bc1c" stroke="#444" stroke-width="1.500"/><path d="M716 125 720 121 722 123 725 116 727 120 730 113" fill="none" stroke="#a55" stroke-width="1.800"/>
<rect x="748" y="82" width="22" height="21" rx="3" fill="#777" stroke="#333" stroke-width="1.500"/><rect x="754" y="85" width="10" height="15" fill="#eee" stroke="#111"/><rect x="754" y="93" width="10" height="7" fill="#222"/>
<rect x="774" y="82" width="22" height="21" rx="3" fill="#888" stroke="#333" stroke-width="1.500"/><path d="M781 87H790L785 92 790 95 781 101" fill="none" stroke="#ddd" stroke-width="1.500"/>
<circle cx="759" cy="118" r="11" fill="#aaa" stroke="#777"/><circle cx="759" cy="118" r="8" fill="#333"/>
<rect x="774" y="108" width="22" height="21" rx="3" fill="#bbb" stroke="#333" stroke-width="1.500"/><path d="M778 113H792M778 118.500H792M778 124H792" stroke="#333" stroke-width="2"/>
<rect x="810" y="82" width="22" height="21" rx="3" fill="#e8208c" stroke="#333" stroke-width="1.500"/><rect x="811" y="83" width="20" height="8" fill="#d0a0c0"/><path d="M811 96H831" stroke="#fff"/><circle cx="812" cy="96" r="1.800" fill="#fff" stroke="#333"/><circle cx="825" cy="96" r="1.800" fill="#fff" stroke="#333"/>
<rect x="810" y="108" width="22" height="21" rx="2" fill="#5bc42a" stroke="#333" stroke-width="1.500"/><path d="M815 113H820V118H815ZM825 113H830V118H825ZM820 118H825V123H820ZM815 123H820V128H815Z" fill="#0a6a0a"/>
<!-- util icons -->
<circle cx="849" cy="97" r="5.500" fill="#cf1414"/><circle cx="860" cy="98" r="5" fill="#cf1414"/><path d="M849 92Q854 88 856 85Q859 90 860 93" fill="none" stroke="#5a3" stroke-width="1.200"/><path d="M850 87 856 84 852 90Z" fill="#4a9a2a"/>
<rect x="844" y="108" width="22" height="21" rx="3" fill="#ddd" stroke="#222" stroke-width="1.500"/><path d="M855 127V116M855 119 849 113M855 118 861 113M852 115 848 118M858 116 863 118" stroke="#111" stroke-width="1.600"/><path d="M846 125H864V128H846Z" fill="#111"/>
<path d="M881 90H890V86L899 93 890 100V96H881Z" fill="#4a4a4a" stroke="#333"/><path d="M881 116H890V112L899 119 890 126V122H881Z" fill="#eee" stroke="#999"/>
<circle cx="925" cy="91" r="8" fill="#aaa" stroke="#777"/><circle cx="929" cy="95" r="6" fill="#d81f74"/><circle cx="921" cy="89" r="2.500" fill="#eee"/>
<path d="M922 109H928V114L933 128H917L922 114Z" fill="#e8e0e8" stroke="#844"/><path d="M919 122H931L933 128H917Z" fill="#e0307c"/>
<!-- toolbar -->
<path d="M463 157.500H1241" stroke="#8a8a8a" stroke-width="1.500"/>
<rect x="463" y="158" width="779" height="29" fill="#fff"/>
<path d="M468 181V163H477L479 166H485V181Z" fill="#5fb545" stroke="#2e6d28"/><path d="M468 168H485" stroke="#cfe8bf" stroke-width="1.500"/>
<rect x="495" y="162" width="20" height="20" rx="2" fill="#2b7ed0" stroke="#174a8a"/><rect x="499" y="163" width="12" height="7" fill="#e8f0fa"/><rect x="499" y="175" width="11" height="6" fill="#888"/>
<path d="M523.500 163V183" stroke="#ccc"/>
<rect x="528" y="163" width="126" height="20" fill="#fff" stroke="#999"/>
<text x="531" y="177" style="fill:#333">138%</text><path d="M643 171 647 175 651 171" fill="none" stroke="#555"/>
<path d="M661 169V163H667M675 163H681V169M681 175V181H675M667 181H661V175" transform="translate(-1 0)" fill="none" stroke="#111" stroke-width="2.600"/><path d="M668 171 672 175M672 171 668 175" stroke="#111" stroke-width="1.500"/>
<path d="M688 172H694L691 175Z" fill="#222"/>
<path d="M700 172Q710 161 721 172Q710 182 700 172Z" fill="#fff" stroke="#1a5a8a" stroke-width="1.500"/><circle cx="710.500" cy="172" r="4.500" fill="#2a8ac4" stroke="#123"/><circle cx="710.500" cy="172" r="1.800" fill="#111"/>
<path d="M727 172H733L730 175Z" fill="#222"/>
<path d="M739 180Q744 174 742 168Q738 175 743 181" fill="none" stroke="#6a2020" stroke-width="1.500"/><path d="M746 177 755 164 758 167 750 180Z" fill="#e85040" stroke="#a33"/>
<ellipse cx="1065" cy="169" rx="7" ry="7" fill="#ddd" stroke="#777"/><path d="M1056 176Q1065 168 1074 176Q1065 185 1056 176Z" fill="#333"/>
<g transform="rotate(-40 1092 172)"><rect x="1081" y="165" width="22" height="14" rx="6" fill="#e8e8e8" stroke="#555" stroke-width="1.500"/><path d="M1088 165V179M1096 165V179" stroke="#777"/></g>
<rect x="1107" y="160" width="25" height="25" fill="#e8f2fa" stroke="#5a9ad0"/>
<g transform="rotate(-40 1119 172)"><rect x="1108" y="165" width="22" height="14" rx="6" fill="#c4141a" stroke="#701010"/><ellipse cx="1125" cy="172" rx="4" ry="6" fill="#801012"/></g>
<path d="M1141.500 163V183M1203.500 163V183" stroke="#ccc"/>
<path d="M1153 167 1162 177 1158 183 1150 176Z" fill="#ddd" stroke="#777"/><path d="M1156 167 1167 163 1172 172 1165 180Z" fill="#5ea826" stroke="#2a6a10"/><ellipse cx="1166" cy="170" rx="3" ry="3.500" fill="#aad45e"/>
<circle cx="1187" cy="172" r="9" fill="#f4f4f4" stroke="#777"/><path d="M1187 163A9 9 0 0 0 1187 181Z" fill="#e88a16"/>
<circle cx="1218" cy="172" r="8" fill="#4a9ae4" stroke="#124"/><ellipse cx="1217" cy="169" rx="4" ry="2.500" fill="#9fd0f4"/>
<path d="M1231 172H1237L1234 175Z" fill="#222"/>

<!-- canvas -->
<rect x="463" y="187" width="779" height="503" fill="#d4d0c8"/>
<path d="M619.500 187V690M814.500 187V690M1008.500 187V690M1203.500 187V690M463 237.500H1242M463 302.500H1242M463 367.500H1242M463 432.500H1242M463 497.500H1242M463 562.500H1242M463 626.500H1242" stroke="#c2beb6"/>
<!-- wires -->
<g clip-path="url(#cv)">
<g fill="none" stroke="#54524e" stroke-width="2.600">
<path d="M463 200C600 193 760 189 915 188"/>
<path d="M463 213C560 245 700 258 868 264"/>
<path d="M463 231C530 300 600 398 753 398"/>
<path d="M463 247C600 252 720 258 868 264"/>
<path d="M463 259C600 261 720 262 868 264"/>
<path d="M463 262C600 263 720 263 868 264"/>
<path d="M463 271C600 267 720 265 868 264"/>
<path d="M463 280C600 271 720 266 868 264"/>
<path d="M463 308C600 290 760 278 870 273"/>
<path d="M463 431C560 427 660 425 753 424"/>
<path d="M760 188C790 235 815 258 868 264"/>
<path d="M844 411C880 411 882 385 870 360C850 320 825 268 868 268"/>
<path d="M1003 193C1040 194 1057 196 1057 199C1057 202 1040 204 1003 204" stroke-width="3.200"/>
<path d="M975 267C1010 265 1060 263 1087 262H1240" stroke-width="3"/>
<path d="M1085 268C1140 254 1160 248 1240 246"/>
<path d="M1085 271C1140 258 1160 252 1240 250"/>
<path d="M1087 298C1140 320 1170 332 1230 333"/>
<path d="M1087 302C1140 325 1170 336 1230 336"/>
<path d="M1150 346C1190 342 1195 310 1205 290C1215 270 1225 252 1240 248"/>
<path d="M1150 349C1195 345 1198 315 1208 295C1218 275 1228 258 1240 253"/>
<path d="M1150 346C1180 342 1200 336 1230 335"/>
<path d="M1150 349C1180 345 1200 338 1230 336"/>
</g>
<path d="M600 263 868 261V267Z" fill="#080808"/>
<!-- A/B comp -->
<use href="#port" x="915.500" y="188"/><use href="#port" x="915.500" y="213"/><use href="#port" x="1003.500" y="200"/>
<path d="M917 180V224Q917 229 922 229H996Q1001 229 1001 224V180Z" fill="url(#cmp)" stroke="#777" stroke-width="1.300"/>
<text x="926" y="193" class="cmp">A</text><text x="926" y="219" class="cmp">B</text><text x="978" y="205" class="cmp">R</text>
<rect x="945" y="190" width="23" height="23" rx="4" fill="#eee" stroke="#666" stroke-width="1.500"/>
<text x="947" y="200" style="font-size:10px;fill:#222">A</text><text x="958" y="211" style="font-size:10px;fill:#222">B</text><path d="M962 191 951 212" stroke="#222" stroke-width="2"/>
<!-- PRC -->
<use href="#port" x="754.500" y="398"/><use href="#port" x="754.500" y="424"/><use href="#port" x="842" y="411"/>
<rect x="756" y="383" width="84" height="56" rx="4" fill="url(#cmp)" stroke="#777" stroke-width="1.300"/>
<text x="766" y="402" class="cmp">P</text><text x="766" y="429" class="cmp">R</text><text x="818" y="416" class="cmp">C</text>
<rect x="783" y="399" width="24" height="23" fill="#f5a410" stroke="#b5601a"/>
<circle cx="795" cy="411" r="7.500" fill="none" stroke="#111" stroke-width="2.200"/><path d="M795 411H806" stroke="#c02" stroke-width="1.500"/><path d="M795 403V411" stroke="#a00" stroke-width="1.200"/>
<!-- Flatten comp -->
<use href="#port" x="869.500" y="264"/><use href="#port" x="869.500" y="291"/>
<rect x="871" y="250" width="104" height="56" rx="4" fill="url(#cmp)" stroke="#777" stroke-width="1.300"/>
<rect x="874" y="255" width="17" height="17" rx="3" fill="#ddd" stroke="#555"/>
<path d="M882.500 258V268M878.500 264 882.500 268.500 886.500 264" fill="none" stroke="#555" stroke-width="1.600"/>
<text x="900" y="269" class="cmp">C</text>
<ellipse cx="881.500" cy="264" rx="16" ry="12.500" fill="none" stroke="#d01822" stroke-width="1"/>
<path d="M935 265 945 266" stroke="#b22" stroke-width="1.500" stroke-dasharray="2 3"/>
<!-- GX comp -->
<use href="#port" x="1149.500" y="346"/><use href="#port" x="1149.500" y="372"/>
<path d="M1085 332H1143Q1148 332 1148 337V383Q1148 388 1143 388H1085Z" fill="url(#cmp)" stroke="#777" stroke-width="1.300"/>
<text x="1122" y="351" class="cmp">G</text><text x="1122" y="377" class="cmp">X</text>
<path d="M1099 348H1095Q1091 348 1091 354V372H1099Z" fill="#f5ae1c" stroke="#6a4a10"/><path d="M1105 347H1110Q1115 349 1115 355V372H1105Z" fill="#f5ae1c" stroke="#6a4a10"/><path d="M1102 345V375" stroke="#888" stroke-dasharray="2 1"/>
<!-- far right comp -->
<use href="#port" x="1232.500" y="335"/><use href="#port" x="1232.500" y="361"/>
<path d="M1242 320H1238Q1234 320 1234 324V372Q1234 376 1238 376H1242Z" fill="url(#cmp)" stroke="#777"/>
</g>
<!-- dial -->
<path d="M1076 644C1072 650 1073 655 1075 658M1088 630C1095 627 1104 630 1110 640" fill="none" stroke="#111" stroke-width="2.800" stroke-dasharray="3 1.500"/>
<circle cx="1093" cy="649" r="18.500" fill="url(#dial)" stroke="#666" stroke-width="1.300"/><path d="M1093 632V636M1093 662V666M1076 649H1080M1106 649H1110" stroke="#fff" stroke-width="2"/>
<!-- red annotation -->
<path d="M882 287V590H835" fill="none" stroke="#e01018" stroke-width="1.400"/>
<path d="M829 590 836 587V593Z" fill="#e01018"/>
<text class="ann" x="569" y="567" textLength="245" lengthAdjust="spacingAndGlyphs">If you can see that sign in</text>
<text class="ann" x="572" y="596" textLength="239" lengthAdjust="spacingAndGlyphs">the object, it is flatening</text>
<text class="ann" x="584" y="625" textLength="213" lengthAdjust="spacingAndGlyphs">the input parameters.</text>
<!-- popup -->
<rect x="896" y="270" width="194" height="379" fill="#555" opacity=".35"/>
<rect x="894.500" y="268.500" width="192" height="377" fill="#fff" stroke="#a8a8a8"/>
<rect x="895" y="269" width="22" height="376" fill="#f7f7f7"/>
<path d="M925 358H1086M925 487H1086M925 555H1086M925 622H1086" stroke="#c4c4c4" stroke-width="1.200"/>
<text x="928" y="285">C</text>
<text x="928" y="307" textLength="32" lengthAdjust="spacingAndGlyphs">Bake...</text>
<text x="928" y="328" textLength="61" lengthAdjust="spacingAndGlyphs">Wire Display</text>
<text x="928" y="348" textLength="55" lengthAdjust="spacingAndGlyphs">Disconnect</text>
<text x="928" y="374" textLength="43" lengthAdjust="spacingAndGlyphs">Principal</text>
<text x="928" y="395" textLength="38" lengthAdjust="spacingAndGlyphs">Reverse</text>
<text x="928" y="415" textLength="33" lengthAdjust="spacingAndGlyphs">Flatten</text>
<text x="928" y="436" textLength="25" lengthAdjust="spacingAndGlyphs">Graft</text>
<text x="928" y="457" textLength="40" lengthAdjust="spacingAndGlyphs">Simplify</text>
<text x="928" y="477" textLength="75" lengthAdjust="spacingAndGlyphs">Reparameterize</text>
<text class="dis" x="928" y="503" textLength="69" lengthAdjust="spacingAndGlyphs">Set one Curve</text>
<text class="dis" x="928" y="524" textLength="95" lengthAdjust="spacingAndGlyphs">Set Multiple Curves</text>
<text class="dis" x="928" y="545" textLength="123" lengthAdjust="spacingAndGlyphs">Manage Curve collection</text>
<text class="dis" x="928" y="571" textLength="59" lengthAdjust="spacingAndGlyphs">Clear values</text>
<text x="928" y="592" textLength="74" lengthAdjust="spacingAndGlyphs">Internalise data</text>
<text class="dis" x="928" y="612" textLength="86" lengthAdjust="spacingAndGlyphs">Extract parameter</text>
<text x="928" y="638" textLength="32" lengthAdjust="spacingAndGlyphs">Help...</text>
<path d="M1073 320V327L1077 323.500ZM1073 341V348L1077 344.500Z" fill="#222"/>
<ellipse cx="906" cy="303" rx="6.500" ry="6" fill="#ddd" stroke="#aaa"/><circle cx="907" cy="303" r="3" fill="#e89a20"/>
<path d="M906 362 914 370 906 378 898 370Z" fill="#f2b820" stroke="#7a6010"/><path d="M902 370H909M907 368 910 370 907 372" stroke="#333" fill="none"/>
<rect x="899.500" y="384.500" width="13" height="13" rx="2" fill="#ccc" stroke="#555"/><path d="M903 388H908V394H904M903 388 905 386M903 388 905 390" fill="none" stroke="#444"/>
<rect x="897" y="402" width="18" height="18" fill="#d8e8f6" stroke="#5a9ad0"/><rect x="899.500" y="404.500" width="13" height="13" rx="2" fill="#ccc" stroke="#555"/><path d="M906 406V415M902 411 906 415.500 910 411" fill="none" stroke="#333" stroke-width="1.300"/>
<rect x="899.500" y="425.500" width="13" height="13" rx="2" fill="#ccc" stroke="#555"/><path d="M906 437V428M902 432 906 427.500 910 432" fill="none" stroke="#333" stroke-width="1.300"/>
<rect x="899.500" y="446.500" width="13" height="13" rx="2" fill="#ccc" stroke="#555"/><path d="M902 449H910L907 453V458H905V453Z" fill="#eee" stroke="#444"/>
<rect x="899.500" y="466.500" width="13" height="13" rx="2" fill="#ccc" stroke="#555"/><path d="M901 477C904 477 903 470 906 470C909 470 908 477 911 477" fill="none" stroke="#333" stroke-width="1.300"/>
<circle cx="906" cy="634" r="7" fill="#4a74cc" stroke="#2a4a8a"/><text x="906" y="638" text-anchor="middle" class="b" style="fill:#fff;font-size:11px">?</text>
<!-- red arrow -->
<path d="M1018 407H977V404L965 411 977 418V415H1018Z" fill="#f00000"/>
<!-- left stub + status -->
<rect x="463" y="663" width="7" height="27" fill="#aaa" stroke="#333"/>
<rect x="463" y="690" width="779" height="21" fill="#f2f2f2"/>
<text x="468" y="708" style="fill:#444;font-size:11px">...</text>
<text x="1174" y="707" style="fill:#777" textLength="40" lengthAdjust="spacingAndGlyphs">1.0.0007</text>
<path d="M1237 709V706M1233 709V706M1237 704V701" stroke="#999" stroke-width="1.500"/>
<rect x="462.500" y=".5" width="780" height="711" fill="none" stroke="#b96a5a"/>
</svg>
</body></html>
